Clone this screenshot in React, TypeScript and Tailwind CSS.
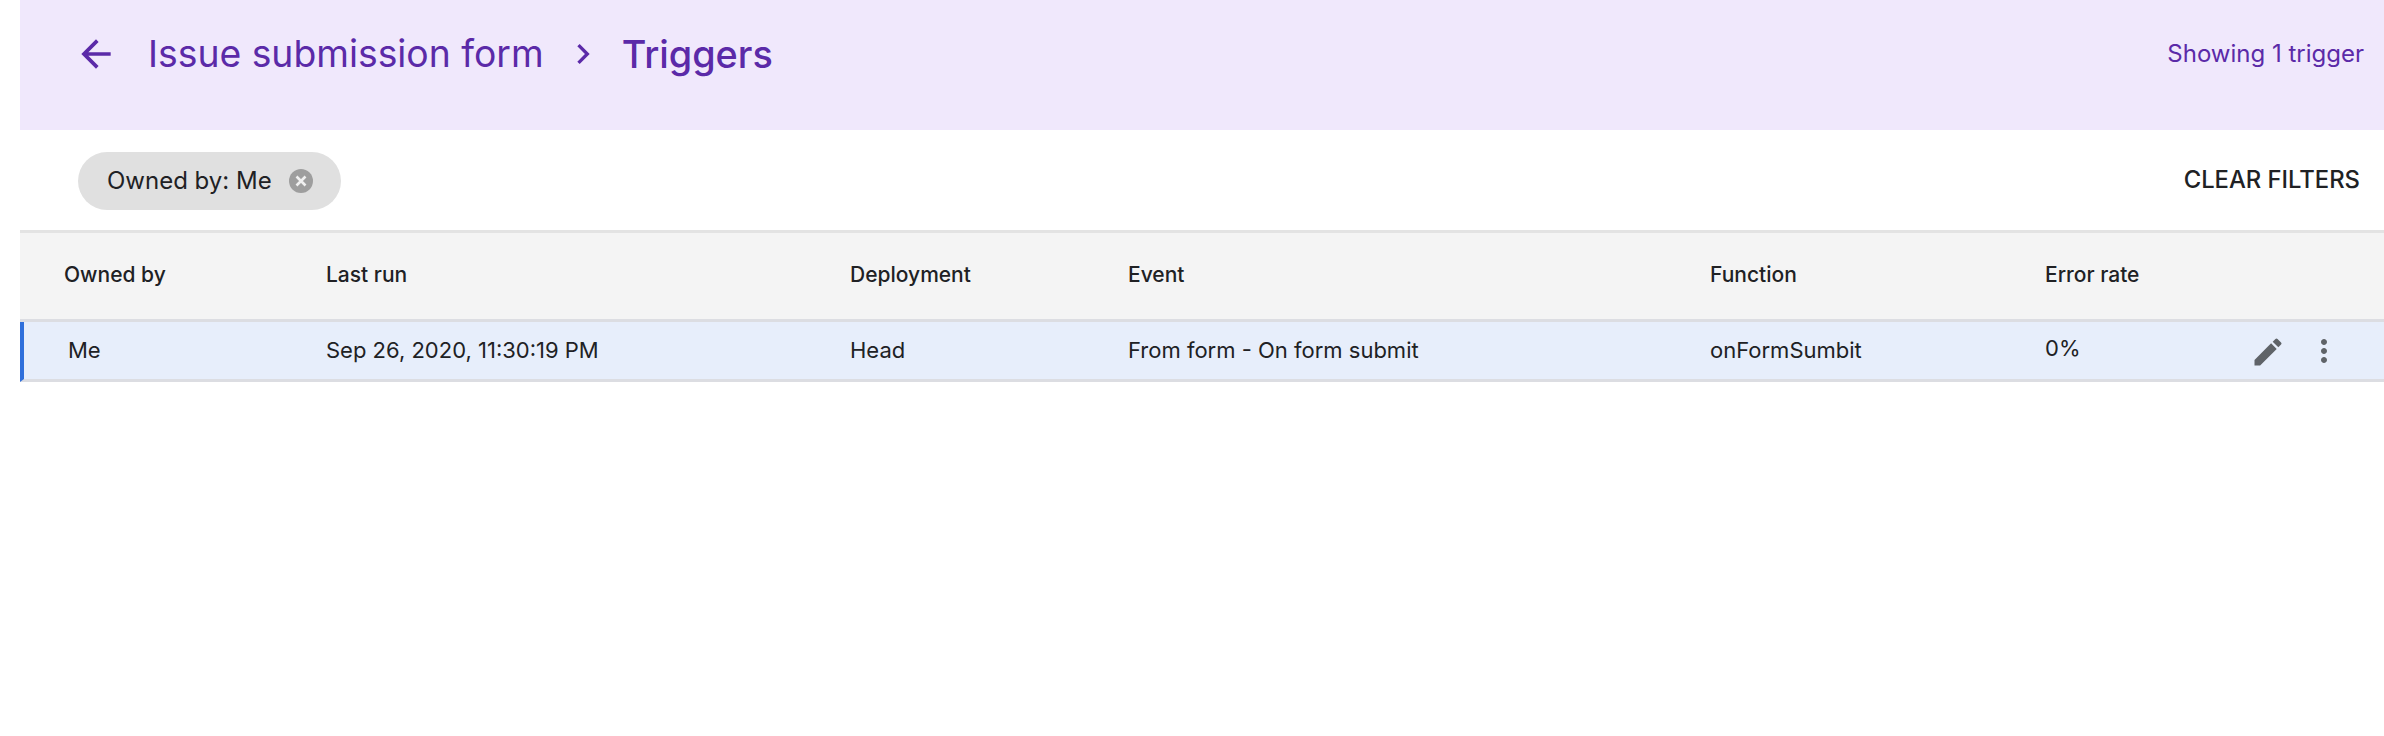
import React from "react";

const font = "font-['Inter','Liberation_Sans',sans-serif]";

function Row({ cells, cls, first, errorCls, last }: { cells: string[]; cls: string; first: string; errorCls?: string; last?: React.ReactNode }) {
  return (
    <div className={`flex items-center ${cls}`}>
      <div className={first}>{cells[0]}</div>
      <div className="w-[524px]">{cells[1]}</div>
      <div className="w-[278px]">{cells[2]}</div>
      <div className="w-[582px]">{cells[3]}</div>
      <div className="w-[335px]">{cells[4]}</div>
      <div className={`w-[205px] ${errorCls ?? ""}`}>{cells[5]}</div>
      {last}
    </div>
  );
}

export default function App() {
  return (
    <div className={`${font} h-[736px] w-[2384px] overflow-hidden bg-white pl-[20px] text-[#202124]`}>
      <header className="flex h-[130px] items-center justify-between bg-[#f0e8fc] pb-[22px] pl-[54px] pr-[20px] text-[#5b2aa8]">
        <div className="flex items-center">
          <svg width="44" height="44" viewBox="0 0 24 24" fill="currentColor" className="mr-[30px]">
            <path d="M20 11H7.83l5.59-5.59L12 4l-8 8 8 8 1.41-1.41L7.83 13H20v-2z" />
          </svg>
          <span className="text-[37.3px] leading-[44px]">Issue submission form</span>
          <svg width="40" height="40" viewBox="0 0 24 24" fill="currentColor" className="ml-[19px] mr-[19px]">
            <path d="M10 6L8.59 7.41 13.17 12l-4.58 4.59L10 18l6-6z" />
          </svg>
          <span className="text-[37.8px] font-medium leading-[44px]">Triggers</span>
        </div>
        <span className="text-[24px]">Showing 1 trigger</span>
      </header>
      <div className="flex h-[100px] items-center justify-between pt-[2px] pl-[58px] pr-[24px]">
        <div className="flex h-[58px] items-center rounded-full bg-[#e0e0e0] pl-[29px] pr-[28px] text-[24px]">
          <span>Owned by: Me</span>
          <svg width="24" height="24" viewBox="0 0 24 24" className="ml-[17px]">
            <circle cx="12" cy="12" r="12" fill="#9e9e9e" />
            <path d="M7.5 7.5l9 9M16.5 7.5l-9 9" stroke="#f0f0f0" strokeWidth="2.6" />
          </svg>
        </div>
        <span className="mb-[2px] text-[23.8px] font-medium">CLEAR FILTERS</span>
      </div>
      <Row
        cls="h-[92px] border-y-[3px] border-t-[#e3e3e3] border-b-[#dcdde2] bg-[#f4f4f4] pb-[2px] pl-[44px] text-[21px] font-medium"
        first="w-[262px]"
        cells={["Owned by", "Last run", "Deployment", "Event", "Function", "Error rate"]}
      />
      <Row
        cls="h-[60px] border-b-[3px] border-b-[#dcdde2] border-l-[4px] border-l-[#2f6fdb] bg-[#e7eefb] pl-[44px] text-[22px]"
        first="w-[258px]"
        errorCls="mb-[4px]"
        cells={["Me", "Sep 26, 2020, 11:30:19 PM", "Head", "From form - On form submit", "onFormSumbit", "0%"]}
        last={
          <div className="flex items-center gap-[20px] text-[#5f6368]">
            <svg width="36" height="36" viewBox="0 0 24 24" fill="currentColor" className="mt-[3px]">
              <path d="M3 17.25V21h3.75L17.81 9.94l-3.75-3.75L3 17.25zM20.71 7.04a1 1 0 0 0 0-1.41l-2.34-2.34a1 1 0 0 0-1.41 0l-1.83 1.83 3.75 3.75 1.83-1.83z" />
            </svg>
            <svg width="36" height="36" viewBox="0 0 24 24" fill="currentColor">
              <path d="M12 8c1.1 0 2-.9 2-2s-.9-2-2-2-2 .9-2 2 .9 2 2 2zm0 2c-1.1 0-2 .9-2 2s.9 2 2 2 2-.9 2-2-.9-2-2-2zm0 6c-1.1 0-2 .9-2 2s.9 2 2 2 2-.9 2-2-.9-2-2-2z" />
            </svg>
          </div>
        }
      />
    </div>
  );
}
